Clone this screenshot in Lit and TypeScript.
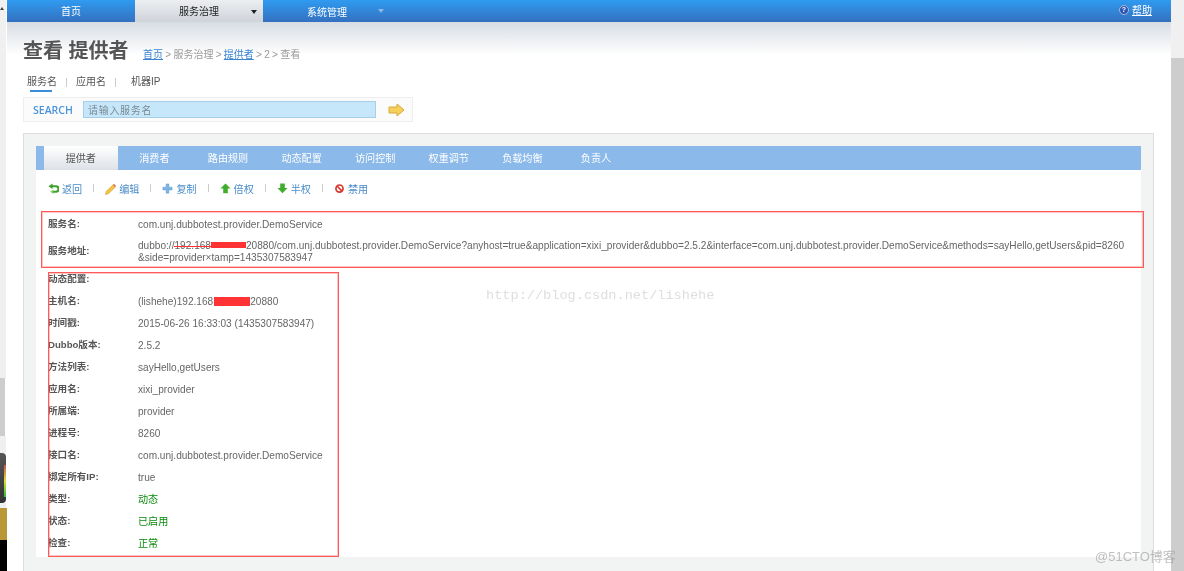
import { LitElement, html, css, svg } from "lit";
import { customElement } from "lit/decorators.js";

const ICONS: Record<string, unknown> = {
  back: svg`<path d="M3 3.500h5.500a3 3 0 0 1 0 6H5.500" fill="none" stroke="#3f9f2f" stroke-width="2.400"/><path d="M5 0.500 0.500 3.500 5 6.500z" fill="#3f9f2f"/><path d="M6 7 2.500 9.500 6 12z" fill="#7cc85f"/>`,
  edit: svg`<path d="M1.500 9 8.500 2l2.500 2.500-7 7L0.500 12.500z" fill="#f3c443" stroke="#cf9526" stroke-width=".6"/><path d="M8.500 2l1.300-1.300 2.500 2.500L11 4.500z" fill="#e0785a"/>`,
  copy: svg`<path d="M4.500 1h3v3.500H11v3H7.500V11h-3V7.500H1v-3h3.500z" fill="#7fb4e4" stroke="#5a90c8" stroke-width=".5"/>`,
  up: svg`<path d="M6 0.500 11.500 6H8.500v5H3.500V6H0.500z" fill="#3fae2c"/>`,
  down: svg`<path d="M3.500 0.500h5v5h3L6 11 0.500 5.500h3z" fill="#3fae2c"/>`,
  ban: svg`<circle cx="6" cy="6" r="3.900" fill="#fff" stroke="#d8352c" stroke-width="1.800"/><path d="M3.200 3.200l5.600 5.600" stroke="#d8352c" stroke-width="1.800"/>`,
};

const TOOLS = [
  ["back", "返回"],
  ["edit", "编辑"],
  ["copy", "复制"],
  ["up", "倍权"],
  ["down", "半权"],
  ["ban", "禁用"],
];

const ROWS = [
  ["主机名:", "host"],
  ["时间戳:", "2015-06-26 16:33:03 (1435307583947)"],
  ["Dubbo版本:", "2.5.2"],
  ["方法列表:", "sayHello,getUsers"],
  ["应用名:", "xixi_provider"],
  ["所属端:", "provider"],
  ["进程号:", "8260"],
  ["接口名:", "com.unj.dubbotest.provider.DemoService"],
  ["绑定所有IP:", "true"],
];

const TABS = ["提供者", "消费者", "路由规则", "动态配置", "访问控制", "权重调节", "负载均衡", "负责人"];

@customElement("app-root")
export class AppRoot extends LitElement {
  static styles = css`
    :host {
      display: flex;
      width: 1184px;
      height: 571px;
      overflow: hidden;
      position: relative;
      background: #fff;
      font-family: "Liberation Sans", "Noto Sans CJK SC", sans-serif;
      font-size: 10.1px;
      color: #666;
      filter: blur(0.3px);
    }
    .strip { width: 7px; flex: none; display: flex; flex-direction: column; background: #fff; }
    .strip-a { height: 378px; width: 6px; background: #f0f0f0; }
    .strip-arrow { width: 0; height: 0; margin: 7px 0 0 0; border: 2px solid transparent; border-bottom: 3px solid #444; border-top: 0; }
    .strip-b { height: 58px; width: 5px; background: #cdcdcd; }
    .strip-gap { height: 17px; width: 6px; background: #f0f0f0; }
    .strip-c { height: 50px; width: 6px; background: linear-gradient(#555, #333); border-radius: 0 4px 4px 0; display: flex; justify-content: flex-end; padding: 12px 0 6px; box-sizing: border-box; }
    .strip-c i { display: block; width: 2px; background: linear-gradient(#c55, #dd3, #3b3); }
    .strip-gap2 { height: 5px; width: 6px; background: #f0f0f0; }
    .strip-d { height: 32px; width: 7px; background: #b99636; }
    .strip-e { flex: 1; width: 7px; background: #000; }
    .main { flex: 1; min-width: 0; display: flex; flex-direction: column; }
    .scroll { width: 13px; flex: none; display: flex; flex-direction: column; background: #cdcdcd; }
    .scroll-top { height: 58px; background: #f0f0f0; }

    .nav { height: 22px; flex: none; display: flex; background: linear-gradient(#2f9bf0, #3470bf); color: #fff; font-size: 10px; }
    .nav-item { width: 128px; display: flex; align-items: center; justify-content: center; position: relative; box-sizing: border-box; padding-bottom: 2px; }
    .nav-item.low { padding-bottom: 0; }
    .nav-item.on { background: linear-gradient(#eceef0, #cfd3da); color: #222; }
    .caret { position: absolute; right: 6px; top: 10px; width: 0; height: 0; border: 3px solid transparent; border-top: 4px solid #222; border-bottom: 0; }
    .caret.light { border-top-color: #8cb8e8; right: 7px; top: 9px; }
    .nav-space { flex: 1; display: flex; justify-content: flex-end; align-items: center; padding: 0 19px 3px 0; gap: 3px; }
    .help { color: #fff; text-decoration: underline; }
    .help-ic { width: 10px; height: 10px; border-radius: 50%; background: #2d55b5; border: 1px solid #a8b8d8; box-sizing: border-box; color: #fff; font: bold 7px/8px "Liberation Sans", sans-serif; text-align: center; }

    .band { background: linear-gradient(#d8dde3, #fff 33px); padding: 17px 0 0 16px; flex: 1; display: flex; flex-direction: column; min-height: 0; }
    .head { display: flex; align-items: flex-end; height: 24px; }
    h1 { margin: 0; font-size: 20px; line-height: 24px; font-weight: 700; color: #555; width: 120px; }
    .crumb { color: #999; font-size: 10px; line-height: 16px; word-spacing: -0.5px; }
    .crumb a { color: #3a84d0; text-decoration: underline; }
    .kinds { display: flex; margin: 12px 0 0 4px; height: 22px; align-items: flex-start; font-size: 10px; color: #555; }
    .kind { line-height: 14px; position: relative; }
    .kind.on { padding-bottom: 3px; }
    .kind.on::after { content: ""; display: block; width: 22px; height: 2px; margin: 1px 0 0 3px; background: #3a8fd8; }
    .kind-sep { width: 1px; height: 9px; background: #ccc; margin: 3px 9px 0 9px; }
    .kind-sep.wide { margin-right: 15px; }
    .search { width: 390px; height: 25px; box-sizing: border-box; border: 1px solid #eee; background: #fbfbfb; display: flex; align-items: center; }
    .search-l { color: #4a94dc; font-family: "Open Sans", sans-serif; font-weight: 600; font-size: 10.5px; width: 59px; padding-left: 9px; box-sizing: border-box; }
    .input { width: 293px; height: 17px; box-sizing: border-box; background: #c6e6f9; border: 1px solid #a5cfeb; color: #7a8a96; line-height: 17px; padding-left: 4px; font-size: 10px; letter-spacing: 0.7px; }
    .go { margin-left: 12px; display: block; }

    .panel { margin: 11px 17px 0 0; flex: 1; background: #f2f4f3; border: 1px solid #ddd; border-bottom: 0; padding: 12px 12px 14px; display: flex; flex-direction: column; min-height: 0; }
    .tabs { height: 24px; flex: none; background: #8bb9ea; display: flex; padding-left: 8px; color: #fff; line-height: 25px; }
    .tab { text-align: center; width: 73.6px; }
    .tab.on { background: linear-gradient(#fff, #dde1e6); color: #555; }
    .body { flex: 1; background: #fff; display: flex; flex-direction: column; }
    .tools { display: flex; align-items: center; height: 36px; padding-left: 12px; margin-bottom: 7px; color: #4a8cc8; flex: none; }
    .tool { display: flex; align-items: center; gap: 3px; }
    .tool svg { display: block; margin-top: 2px; }
    .tsep { width: 1px; height: 8px; background: #ccc; margin: 0 11px; }
    .row { display: flex; align-items: center; height: 22px; padding-left: 12px; flex: none; }
    .row.tall { height: 33px; line-height: 12px; }
    .k { width: 90px; flex: none; font-weight: 700; font-size: 9.6px; color: #555; padding-bottom: 2px; }
    .v { color: #666; white-space: nowrap; }
    .v.ok { color: #0a8a0a; padding-bottom: 2px; }
    .redact { display: inline-block; background: #f33; height: 9px; width: 36px; margin-left: 1px; vertical-align: -1px; }
    .redact.thin { height: 6px; width: 35px; margin-left: 0; vertical-align: 1px; }
    .strike { position: relative; }
    .strike i { position: absolute; left: 0; right: 0; top: 6px; height: 1px; background: #f33; }
    .mark { position: absolute; box-sizing: border-box; pointer-events: none; border: 1px solid #ff5a5a; box-shadow: inset 0 0 0 1px rgba(255, 90, 90, 0.35); }
    .m1 { left: 41px; top: 211px; width: 1103px; height: 57px; }
    .m2 { left: 48px; top: 272px; width: 291px; height: 285px; }
    .water { position: absolute; left: 486px; top: 288px; font-family: "Liberation Mono", monospace; font-size: 13.6px; color: #dedede; }
    .logo { position: absolute; left: 1095px; top: 546px; font-size: 13px; color: rgba(150,150,150,.6); }
  `;

  renderValue(v: string) {
    if (v === "host") return html`(lishehe)192.168<span class="redact"></span>20880`;
    return v;
  }

  render() {
    return html`
      <div class="strip">
        <div class="strip-a"><div class="strip-arrow"></div></div><div class="strip-b"></div><div class="strip-gap"></div>
        <div class="strip-c"><i></i></div><div class="strip-gap2"></div><div class="strip-d"></div><div class="strip-e"></div>
      </div>
      <div class="main">
        <div class="nav">
          <div class="nav-item">首页</div>
          <div class="nav-item on">服务治理<span class="caret"></span></div>
          <div class="nav-item low">系统管理<span class="caret light"></span></div>
          <div class="nav-space"><span class="help-ic">?</span><span class="help">帮助</span></div>
        </div>
        <div class="band">
          <div class="head">
            <h1>查看 提供者</h1>
            <div class="crumb"><a>首页</a> &gt; 服务治理 &gt; <a>提供者</a> &gt; 2 &gt; 查看</div>
          </div>
          <div class="kinds">
            <span class="kind on">服务名</span><span class="kind-sep"></span>
            <span class="kind">应用名</span><span class="kind-sep wide"></span>
            <span class="kind">机器IP</span>
          </div>
          <div class="search">
            <span class="search-l">SEARCH</span>
            <div class="input">请输入服务名</div>
            <svg class="go" width="17" height="14" viewBox="0 0 17 14"><path d="M1 4h8V1l7 6-7 6v-3H1z" fill="#f6cf5c" stroke="#d8a93a"/></svg>
          </div>
          <div class="panel">
            <div class="tabs">
              ${TABS.map((t, i) => html`<div class="tab ${i === 0 ? "on" : ""}">${t}</div>`)}
            </div>
            <div class="body">
              <div class="tools">
                ${TOOLS.map(([ic, t], i) => html`${i ? html`<span class="tsep"></span>` : ""}<span class="tool"><svg width="11" height="12" viewBox="0 0 12 13">${ICONS[ic]}</svg>${t}</span>`)}
              </div>
              <div class="row"><span class="k">服务名:</span><span class="v">com.unj.dubbotest.provider.DemoService</span></div>
              <div class="row tall"><span class="k">服务地址:</span><span class="v">dubbo://<span class="strike">192.168<span class="redact thin"></span><i></i></span>20880/com.unj.dubbotest.provider.DemoService?anyhost=true&application=xixi_provider&dubbo=2.5.2&interface=com.unj.dubbotest.provider.DemoService&methods=sayHello,getUsers&pid=8260<br>&side=provider×tamp=1435307583947</span></div>
              <div class="row"><span class="k">动态配置:</span></div>
              ${ROWS.map(([k, v]) => html`<div class="row"><span class="k">${k}</span><span class="v">${this.renderValue(v)}</span></div>`)}
              <div class="row"><span class="k">类型:</span><span class="v ok">动态</span></div>
              <div class="row"><span class="k">状态:</span><span class="v ok">已启用</span></div>
              <div class="row"><span class="k">检查:</span><span class="v ok">正常</span></div>
            </div>
          </div>
        </div>
      </div>
      <div class="scroll"><div class="scroll-top"></div></div>
      <div class="mark m1"></div>
      <div class="mark m2"></div>
      <div class="water">http://blog.csdn.net/lishehe</div>
      <div class="logo">@51CTO博客</div>
    `;
  }
}
